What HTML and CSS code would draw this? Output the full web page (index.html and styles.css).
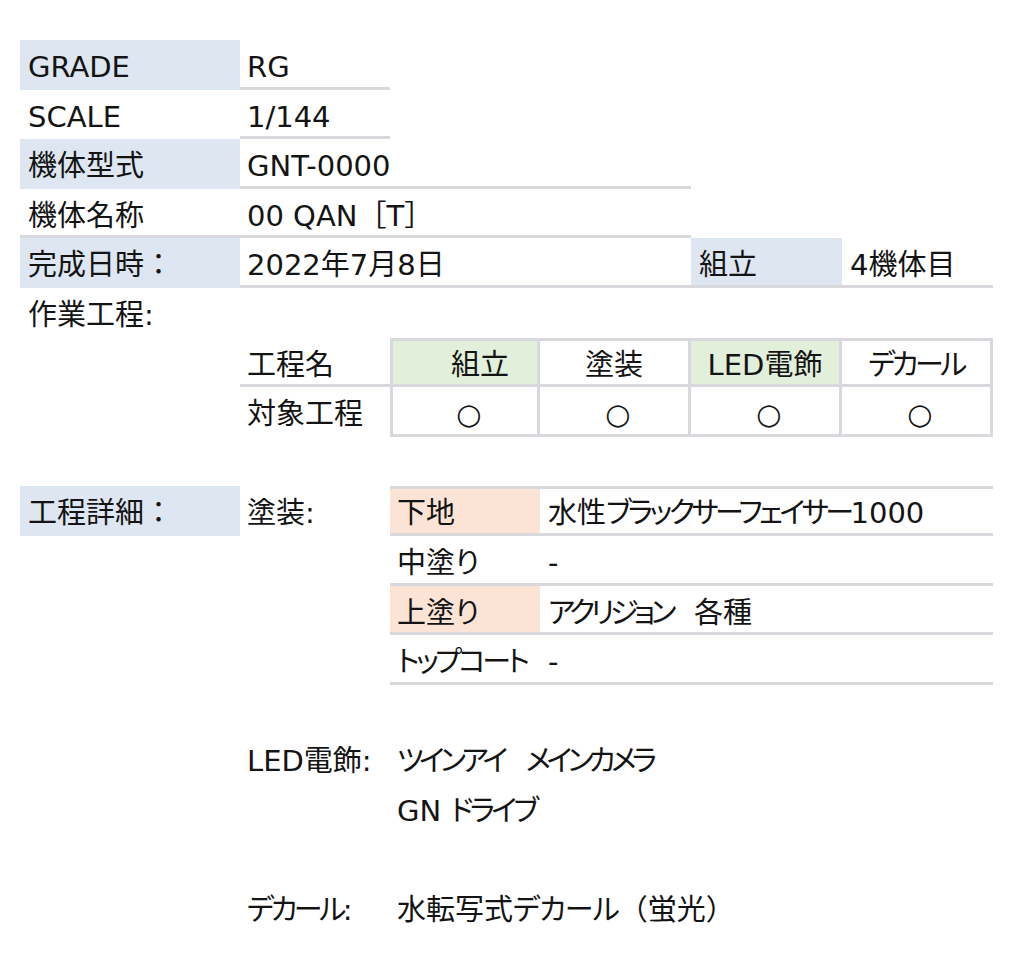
FILE: index.html
```html
<!DOCTYPE html>
<html lang="ja">
<head>
<meta charset="utf-8">
<title>RG 00 QAN[T]</title>
<link rel="stylesheet" href="styles.css">
</head>
<body>
<div class="sheet">
  <div class="cell ca blue">GRADE</div>
  <div class="cell cb bb">RG</div>

  <div class="cell ca">SCALE</div>
  <div class="cell cb bb">1/144</div>

  <div class="cell ca blue">機体型式</div>
  <div class="cell b-d bb">GNT-0000</div>

  <div class="cell ca bb">機体名称</div>
  <div class="cell b-d bb">00 QAN［T］</div>

  <div class="cell ca blue">完成日時：</div>
  <div class="cell b-d bb">2022年7月8日</div>
  <div class="cell ce blue bb">組立</div>
  <div class="cell cf bb">4機体目</div>

  <div class="cell full">作業工程:</div>

  <div class="cell cb bb">工程名</div>
  <div class="cell cc tb tl tt green ctr ind">組立</div>
  <div class="cell cd tb tt ctr">塗装</div>
  <div class="cell ce tb tt green ctr">LED電飾</div>
  <div class="cell cf tb tt ctr"><span class="k">デカール</span></div>

  <div class="cell cb">対象工程</div>
  <div class="cell cc tb tl ctr mark">○</div>
  <div class="cell cd tb ctr mark">○</div>
  <div class="cell ce tb ctr mark">○</div>
  <div class="cell cf tb ctr mark">○</div>

  <div class="spacer"></div>

  <div class="cell ca blue">工程詳細：</div>
  <div class="cell cb">塗装:</div>
  <div class="cell cc peach bb tt">下地</div>
  <div class="cell d-f bb tt">水性<span class="k">ブラックサーフェイサー</span>1000</div>

  <div class="cell cc bb">中塗<span class="k">り</span></div>
  <div class="cell d-f bb">-</div>

  <div class="cell cc peach bb">上塗<span class="k">り</span></div>
  <div class="cell d-f bb"><span class="k4">アクリジョン</span><span class="sp">　</span>各種</div>

  <div class="cell cc bb"><span class="k">トップコート</span></div>
  <div class="cell d-f bb">-</div>

  <div class="spacer"></div>

  <div class="cell cb">LED電飾:</div>
  <div class="cell c-f"><span class="k4">ツインアイ</span><span class="sp">　</span><span class="k4">メインカメラ</span></div>

  <div class="cell c-f">GN <span class="k">ドライブ</span></div>

  <div class="spacer"></div>

  <div class="cell cb"><span class="k">デカール</span>:</div>
  <div class="cell c-f">水転写式<span class="k2">デカール</span>（蛍光）</div>
</div>
</body>
</html>
```

FILE: styles.css
```css
html, body {
  margin: 0;
  padding: 0;
  background: #ffffff;
}

body {
  font-family: "DejaVu Sans", "Noto Sans CJK JP", sans-serif;
  font-size: 29px;
  color: #141414;
}

.sheet {
  display: grid;
  grid-template-columns: 220px 150px 150px 151px 151px 151px;
  grid-auto-rows: 49.6px;
  margin: 40px 0 0 20px;
  width: 973px;
}

.cell {
  box-sizing: border-box;
  padding: 4px 0 0 8px;
  line-height: 46px;
  white-space: nowrap;
  overflow: visible;
}

.spacer { grid-column: 1 / -1; }
.full { grid-column: 1 / -1; }

.ca { grid-column: 1; }
.cb { grid-column: 2; padding-left: 7px; }
.cc { grid-column: 3; padding-left: 7px; }
.cd { grid-column: 4; }
.ce { grid-column: 5; }
.cf { grid-column: 6; }
.b-d { grid-column: 2 / 5; padding-left: 7px; }
.d-f { grid-column: 4 / 7; }
.c-f { grid-column: 3 / 7; padding-left: 7px; }

.blue { background: #dde6f1; }
.green { background: #e2efda; }
.peach { background: #fbe4d6; }

.bb { border-bottom: 3px solid #d8d8dd; }
.tt { border-top: 3px solid #d8d8dd; padding-top: 1px; }
.tb { border-right: 3px solid #d8d8dd; border-bottom: 3px solid #d8d8dd; }
.tl { border-left: 3px solid #d8d8dd; }

.ctr { text-align: center; padding-left: 0; }
.ind { padding-left: 30px; }
.mark { padding-left: 8px; }

.k {
  font-feature-settings: "palt" 1;
  letter-spacing: -3.5px;
}

.k4 {
  font-feature-settings: "palt" 1;
  letter-spacing: -4.5px;
}

.k2 {
  font-feature-settings: "palt" 1;
  letter-spacing: -1px;
}

.sp {
  letter-spacing: -7px;
}
```
